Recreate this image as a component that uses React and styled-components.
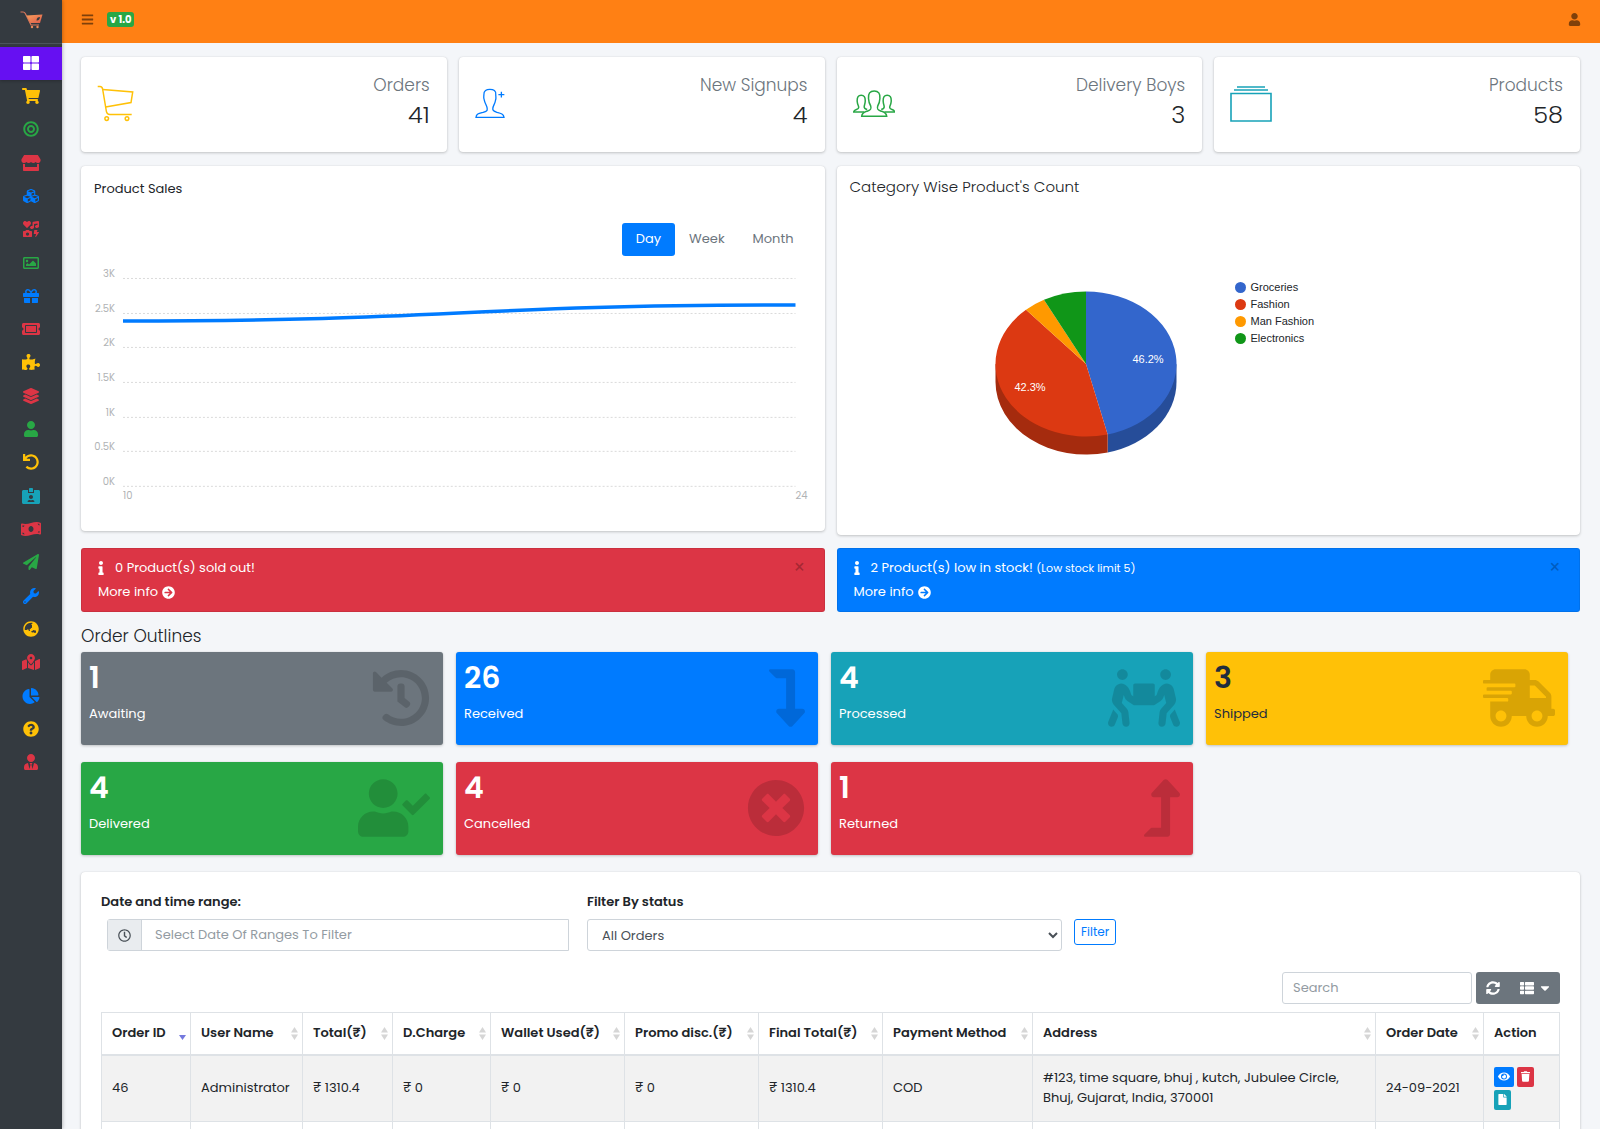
import React from "react"
import styled, { createGlobalStyle } from "styled-components"
import {
    FaThLarge, FaShoppingCart, FaBullseye, FaStore, FaCubes, FaIcons, FaRegImage, FaGift,
    FaTicketAlt, FaPuzzlePiece, FaLayerGroup, FaUser, FaUndo, FaIdCardAlt, FaMoneyBillWave,
    FaPaperPlane, FaWrench, FaGlobeAsia, FaMapMarkedAlt, FaChartPie, FaQuestionCircle, FaUserTie,
    FaBars, FaInfo, FaArrowCircleRight, FaHistory, FaLevelDownAlt, FaPeopleCarry, FaShippingFast,
    FaUserCheck, FaTimesCircle, FaLevelUpAlt, FaRegClock, FaSyncAlt, FaThList, FaCaretDown,
    FaEye, FaTrash, FaFile
} from "react-icons/fa"

const colors = {
    blue: "#007bff",
    indigo: "#6610f2",
    red: "#dc3545",
    orange: "#ff8014",
    yellow: "#ffc107",
    green: "#28a745",
    teal: "#17a2b8",
    gray: "#6c757d",
    dark: "#343a40",
    text: "#212529",
    border: "#dee2e6"
}

const GlobalStyle = createGlobalStyle`
    * { box-sizing: border-box; }
    body {
        margin: 0;
        background: #f4f6f9;
        color: ${colors.text};
        font-family: Poppins, Inter, "Open Sans", sans-serif;
        font-size: 13px;
        line-height: 20px;
    }
    button, input, select { font: inherit; }
    h1, h2, p, ul, dl, dd { margin: 0; padding: 0; font-weight: 400; }
    a { color: inherit; text-decoration: none; }
    svg { display: block; }
`

const Layout = styled.div`
    display: flex;
    height: 100vh;
`

const Sidebar = styled.aside`
    flex: 0 0 62px;
    background: ${colors.dark};
    box-shadow: 0 0 4px rgba(0, 0, 0, 0.35);
    z-index: 1;
    overflow: hidden;
`

const Brand = styled.a`
    display: flex;
    align-items: center;
    justify-content: center;
    height: 44px;
    padding-bottom: 4px;
    border-bottom: 1px solid #4b545c;
    margin-bottom: 3px;
`

const SideNav = styled.nav`
    display: flex;
    flex-direction: column;
    height: 733px;
`

const SideLink = styled.a`
    flex: 1;
    display: flex;
    align-items: center;
    justify-content: center;
    padding-bottom: 2px;
    color: ${props => props.$color};
    background: ${props => props.$active ? colors.indigo : "none"};
    box-shadow: ${props => props.$active ? "0 1px 3px rgba(0, 0, 0, 0.24)" : "none"};

    svg { height: 16px; width: 20px; }
`

const Page = styled.div`
    flex: 1;
    min-width: 0;
    overflow-y: auto;
    scrollbar-width: none;
`

const TopBar = styled.header`
    display: flex;
    align-items: center;
    height: 43px;
    padding: 0 19px 4px;
    background: ${colors.orange};
    color: rgba(0, 0, 0, 0.5);
`

const BarButton = styled.button`
    display: flex;
    padding: 0;
    border: 0;
    background: none;
    color: inherit;
    font-size: 13px;
    margin-left: ${props => props.$end ? "auto" : "0"};
`

const Version = styled.span`
    margin-left: 13px;
    padding: 0 3px;
    border-radius: 3px;
    background: ${colors.green};
    color: #fff;
    font-size: 10px;
    font-weight: 700;
    line-height: 15px;
`

const Main = styled.main`
    padding: 14px 20px 20px 19px;
`

const StatGrid = styled.section`
    display: grid;
    grid-template-columns: repeat(4, 1fr);
    gap: 12px;
    margin-bottom: 14px;
`

const Card = styled.div`
    background: #fff;
    border-radius: 4px;
    box-shadow: 0 0 1px rgba(0, 0, 0, 0.13), 0 1px 3px rgba(0, 0, 0, 0.2);
`

const StatCard = styled(Card)`
    display: flex;
    align-items: center;
    justify-content: space-between;
    height: 95px;
    padding: 0 17px 2px 16px;
`

const StatText = styled.dl`
    padding-bottom: 6px;
    text-align: right;
    font-weight: 300;

    dt {
        color: ${colors.gray};
        font-size: 17px;
        line-height: 28px;
    }
    dd {
        font-size: 24px;
        font-weight: 300;
        line-height: 32px;
    }
`

const TwoColumns = styled.section`
    display: grid;
    grid-template-columns: 1fr 1fr;
    align-items: start;
    gap: 12px;
    margin-bottom: 13px;
`

const SalesPanel = styled(Card)`
    padding: 13px 12px 0 13px;
`

const PiePanel = styled(Card)`
    padding: 11px 13px 80px;
`

const PanelTitle = styled.h2`
    font-size: ${props => props.$large ? "15px" : "13px"};
    font-weight: ${props => props.$large ? 300 : 400};
    line-height: 20px;
`

const Tabs = styled.div`
    display: flex;
    justify-content: flex-end;
    padding: 24px 5px 0;
`

const Tab = styled.button`
    padding: 6px 14px 7px;
    border: 0;
    border-radius: 3px;
    background: ${props => props.$active ? colors.blue : "none"};
    color: ${props => props.$active ? "#fff" : colors.gray};
`

const LineChart = styled.svg`
    width: 100%;
    font-size: 10px;
    fill: #b0b3b5;
`

const PieRow = styled.div`
    display: flex;
    gap: 58px;
    padding: 82px 0 0 145px;
    font-family: "Liberation Sans", Arial, sans-serif;
    font-size: 11px;

    svg { margin-top: 12px; }
`

const Legend = styled.ul`
    list-style: none;

    li {
        display: flex;
        align-items: center;
        gap: 5px;
        height: 17px;
        line-height: 17px;
    }
`

const Dot = styled.span`
    width: 11px;
    height: 11px;
    border-radius: 50%;
    background: ${props => props.$color};
`

const Alert = styled.div`
    display: flex;
    justify-content: space-between;
    height: 64px;
    padding: 7px 18px 7px 16px;
    border-radius: 3px;
    border: 1px solid rgba(0, 0, 0, 0.08);
    background: ${props => props.$color};
    color: #fff;
    line-height: 24px;

    small { font-size: 11px; }
`

const AlertLine = styled.p`
    display: flex;
    align-items: center;
    gap: 11px;

    svg { width: 6px; height: 14px; }
`

const MoreLink = styled.a`
    display: inline-flex;
    align-items: center;
    gap: 4px;
`

const CloseButton = styled.button`
    align-self: flex-start;
    padding: 0;
    border: 0;
    background: none;
    color: rgba(0, 0, 0, 0.25);
    font-size: 19px;
    line-height: 24px;
`

const Heading = styled.h1`
    font-size: 17px;
    font-weight: 300;
    line-height: 22px;
    margin-bottom: 5px;
`

const OutlineGrid = styled.section`
    display: grid;
    grid-template-columns: repeat(4, 1fr);
    gap: 17px 13px;
    padding-right: 12px;
    margin-bottom: 17px;
`

const OutlineBox = styled.a`
    display: flex;
    justify-content: space-between;
    height: 93px;
    padding: 7px 13px 0 8px;
    border-radius: 3px;
    background: ${props => props.$color};
    color: ${props => props.$dark ? "#1f2d3d" : "#fff"};
    box-shadow: 0 0 1px rgba(0, 0, 0, 0.13), 0 1px 3px rgba(0, 0, 0, 0.2);

    strong {
        display: block;
        font-size: 30px;
        font-weight: 600;
        line-height: 38px;
        margin-bottom: 7px;
    }
    svg {
        height: 58px;
        width: ${props => props.$iconWidth};
        margin-top: 10px;
        color: rgba(0, 0, 0, 0.15);
    }
`

const OrdersCard = styled(Card)`
    padding: 20px 20px 0;
`

const FilterForm = styled.form`
    display: grid;
    grid-template-columns: minmax(0, 468px) minmax(0, 475px) auto;
    justify-content: start;
    column-gap: 18px;
`

const Field = styled.div`
    label {
        display: block;
        font-weight: 600;
        margin-bottom: 7px;
    }
`

const InputGroup = styled.div`
    display: flex;
    height: 32px;
    margin-left: 6px;
    border: 1px solid #ced4da;
    border-radius: 3px 0 0 3px;

    input {
        flex: 1;
        min-width: 0;
        border: 0;
        padding: 0 13px;
        color: #495057;
    }
    input::placeholder { color: #939ba2; }
`

const Addon = styled.span`
    display: flex;
    align-items: center;
    justify-content: center;
    width: 34px;
    border-right: 1px solid #ced4da;
    background: #e9ecef;
    color: #495057;
`

const StatusSelect = styled.select`
    width: 100%;
    height: 32px;
    padding: 0 10px;
    border: 1px solid #ced4da;
    border-radius: 3px;
    background: #fff;
    color: #495057;
`

const FilterButton = styled.button`
    align-self: start;
    height: 26px;
    margin: 27px 0 0 -6px;
    padding: 0 6px;
    border: 1px solid ${colors.blue};
    border-radius: 3px;
    background: none;
    color: ${colors.blue};
    font-size: 12px;
`

const Toolbar = styled.div`
    display: flex;
    justify-content: flex-end;
    gap: 4px;
    margin: 21px 0 8px;

    input {
        width: 190px;
        height: 32px;
        padding: 0 10px;
        border: 1px solid #ced4da;
        border-radius: 3px;
    }
    input::placeholder { color: #939ba2; }
`

const ToolGroup = styled.div`
    display: flex;
    height: 32px;
    border-radius: 3px;
    background: ${colors.gray};
    color: #fff;

    button {
        display: flex;
        align-items: center;
        gap: 5px;
        padding: 0 10px;
        border: 0;
        background: none;
        color: inherit;
        font-size: 14px;
    }
    button + button { padding-right: 9px; }
    button svg + svg { height: 14px; width: 12px; }
`

const OrdersTable = styled.table`
    width: 100%;
    table-layout: fixed;
    border-collapse: collapse;

    th, td {
        border: 1px solid ${colors.border};
        padding: 0 10px;
        text-align: left;
        white-space: nowrap;
    }
    th {
        height: 42px;
        border-bottom-width: 2px;
        font-weight: 600;
    }
    td { height: 67px; }
    td.wrap { white-space: normal; }
    tbody tr:nth-child(odd) { background: #f2f2f2; }
`

const SortHeader = styled.div`
    display: flex;
    align-items: center;
    justify-content: space-between;
    margin-right: -6px;
`

const Actions = styled.div`
    display: flex;
    flex-wrap: wrap;
    gap: 3px;
`

const ActionButton = styled.button`
    display: flex;
    align-items: center;
    height: 20px;
    padding: 0 4px;
    border: 0;
    border-radius: 2px;
    background: ${props => props.$color};
    color: #fff;

    svg {
        height: 11px;
        width: ${props => props.$wide ? "12px" : "9px"};
    }
`

const sideLinks = [
    ["Dashboard", FaThLarge, "#fff"],
    ["Orders", FaShoppingCart, colors.yellow],
    ["Categories", FaBullseye, colors.green],
    ["Sellers", FaStore, colors.red],
    ["Products", FaCubes, colors.blue],
    ["Media", FaIcons, colors.red],
    ["Slider images", FaRegImage, colors.green],
    ["Offers", FaGift, colors.blue],
    ["Support tickets", FaTicketAlt, colors.red],
    ["Promo codes", FaPuzzlePiece, colors.yellow],
    ["Featured sections", FaLayerGroup, colors.red],
    ["Customers", FaUser, colors.green],
    ["Return requests", FaUndo, colors.yellow],
    ["Delivery boys", FaIdCardAlt, colors.teal],
    ["Payment requests", FaMoneyBillWave, colors.red],
    ["Send notification", FaPaperPlane, colors.green],
    ["System", FaWrench, colors.blue],
    ["Web settings", FaGlobeAsia, colors.yellow],
    ["Locations", FaMapMarkedAlt, colors.red],
    ["Reports", FaChartPie, colors.blue],
    ["FAQ", FaQuestionCircle, colors.yellow],
    ["System users", FaUserTie, colors.red]
]

const outlines = [
    { count: 1, label: "Awaiting", color: colors.gray, Icon: FaHistory, iconWidth: "58px" },
    { count: 26, label: "Received", color: colors.blue, Icon: FaLevelDownAlt, iconWidth: "36px" },
    { count: 4, label: "Processed", color: colors.teal, Icon: FaPeopleCarry, iconWidth: "72px" },
    { count: 3, label: "Shipped", color: colors.yellow, Icon: FaShippingFast, iconWidth: "72px", dark: true },
    { count: 4, label: "Delivered", color: colors.green, Icon: FaUserCheck, iconWidth: "72px" },
    { count: 4, label: "Cancelled", color: colors.red, Icon: FaTimesCircle, iconWidth: "58px" },
    { count: 1, label: "Returned", color: colors.red, Icon: FaLevelUpAlt, iconWidth: "36px" }
]

const columns = [
    ["Order ID", 89], ["User Name", 112], ["Total(₹)", 90], ["D.Charge", 98], ["Wallet Used(₹)", 134],
    ["Promo disc.(₹)", 134], ["Final Total(₹)", 124], ["Payment Method", 150], ["Address", null],
    ["Order Date", 108], ["Action", 76]
]

const slices = [
    { name: "Groceries", count: 12, color: "#3366cc" },
    { name: "Fashion", count: 11, color: "#dc3912" },
    { name: "Man Fashion", count: 1, color: "#ff9900" },
    { name: "Electronics", count: 2, color: "#109618" }
]

function Logo() {
    return (
        <svg width="23" height="18" viewBox="0 0 23 18" fill="none">
            <defs>
                <linearGradient id="logo" x1="0" y1="0" x2="1" y2="1">
                    <stop offset="0" stopColor="#f9a05c" />
                    <stop offset="1" stopColor="#dd5a4a" />
                </linearGradient>
            </defs>
            <path d="M0.5 1H3q1.500 0 2.300 1.500L11 14h8" stroke="#d9775a" strokeWidth="1.200" />
            <path d="M6.500 4.500L22.500 3.500 20 12H10.300Z" fill="url(#logo)" />
            <path d="M16.500 9.500c0-2.500 1.500-3.500 3.500-3.500-.3 2.500-1.500 4-3.500 3.500Z" fill="#343a40" />
            <circle cx="12" cy="16" r="1.200" fill="#ee8a5b" />
            <circle cx="17.500" cy="16" r="1.200" fill="#ee8a5b" />
        </svg>
    )
}

function CartOutline() {
    return (
        <svg width="37" height="37" viewBox="97 85 37 37" fill="none" stroke={colors.yellow} strokeWidth="1.500">
            <path d="M97.700 86.500h2.300q2.300 0 2.700 3l3.700 22q.5 3 3.600 3h21.700" />
            <path d="M102.700 89.500l30 2.500-1.700 10.500-25.400 4.400" />
            <circle cx="106.700" cy="118.600" r="1.800" />
            <circle cx="127" cy="118.600" r="1.800" />
        </svg>
    )
}

function PersonAddOutline() {
    return (
        <svg width="30" height="31" viewBox="106 143 91 92" fill="none" stroke={colors.blue} strokeWidth="4">
            <path d="M109 231C110 220 118 219 130 216C140 213 144 212 143 205C143 196 136 190 134 178C131 170 133 168 133 162C132 150 141 146 151 146C162 146 171 150 169 163C169 170 171 172 168 180C167 190 160 196 160 205C159 212 164 213 173 216C185 219 193 221 194 231Z" />
            <path d="M177 162h18M186 153v18" />
        </svg>
    )
}

function PeopleOutline() {
    return (
        <svg width="42" height="28" viewBox="853 90 42 28" fill="none" stroke={colors.green} strokeWidth="1.500">
            <path d="M861.700 116.300c.3-4 3-4.300 6-5.300 3.600-1.200 3.700-2.500 3-5-1.300-2-2-4-2.200-7.500-.5-5 1.500-7.500 5.700-7.500s6.200 2.500 5.700 7.500c-.2 3.500-.9 5.500-2.200 7.500-.7 2.500-.6 3.800 3 5 3 1 5.700 1.300 6 5.300Z" />
            <path d="M864 112h-10.300c.2-3 5-2 5-4.500 0-2-1.200-2.500-1.500-6-.3-4.500 1.300-6.300 4-6.300s4.300 1.800 4 6.300c-.2 3-1 3.500-1 5.500 0 1.500 1 2 3 2.500" />
            <path d="M884.400 112h10.300c-.2-3-5-2-5-4.500 0-2 1.200-2.500 1.500-6 .3-4.500-1.300-6.300-4-6.300s-4.300 1.800-4 6.300c.2 3 1 3.500 1 5.500 0 1.500-1 2-3 2.500" />
        </svg>
    )
}

function AlbumsOutline() {
    return (
        <svg width="42" height="36" viewBox="0 0 42 36" fill="none" stroke={colors.teal} strokeWidth="1.600">
            <path d="M7 1h28M4 4h34M1 7.500h40V35H1Z" />
        </svg>
    )
}

const stats = [
    { label: "Orders", value: 41, Icon: CartOutline },
    { label: "New Signups", value: 4, Icon: PersonAddOutline },
    { label: "Delivery Boys", value: 3, Icon: PeopleOutline },
    { label: "Products", value: 58, Icon: AlbumsOutline }
]

function SalesChart() {
    const labels = ["3K", "2.5K", "2K", "1.5K", "1K", "0.5K", "0K"]
    const gridY = index => Math.round(22 + index * 34.67)

    return (
        <LineChart viewBox="0 0 719 275" role="img" aria-label="Product sales by day">
            {labels.map((label, index) => (
                <g key={label}>
                    <text x="21" y={gridY(index) - 1} textAnchor="end">{label}</text>
                    <line x1="29" x2="702" y1={gridY(index) + 0.5} y2={gridY(index) + 0.5}
                        stroke="#dadada" strokeDasharray="2 2" />
                </g>
            ))}
            <path d="M29 65C365 65 365 49 702 49" fill="none" stroke={colors.blue} strokeWidth="3.500" />
            <text x="29" y="243">10</text>
            <text x="702" y="243">24</text>
        </LineChart>
    )
}

function PieChart() {
    const cx = 91
    const cy = 73
    const rx = 90.5
    const ry = 72.5
    const total = slices.reduce((sum, slice) => sum + slice.count, 0)
    const point = part => {
        const angle = (part / total) * Math.PI * 2
        return [cx + rx * Math.sin(angle), cy - ry * Math.cos(angle)]
    }
    const [splitX, splitY] = point(12)
    let start = 0

    return (
        <svg width="182" height="164" viewBox="0 0 182 164" role="img" aria-label="Products per category">
            <path d={`M${cx + rx} ${cy}v18A${rx} ${ry} 0 0 1 ${splitX} ${splitY + 18}v-18Z`} fill="#264d99" />
            <path d={`M${cx - rx} ${cy}v18A${rx} ${ry} 0 0 0 ${splitX} ${splitY + 18}v-18Z`} fill="#a52b0e" />
            {slices.map(slice => {
                const [x1, y1] = point(start)
                start += slice.count
                const [x2, y2] = point(start)
                return (
                    <path key={slice.name} fill={slice.color}
                        d={`M${cx} ${cy}L${x1} ${y1}A${rx} ${ry} 0 0 1 ${x2} ${y2}Z`} />
                )
            })}
            <text x="153" y="72" textAnchor="middle" fill="#fff">46.2%</text>
            <text x="35" y="100" textAnchor="middle" fill="#fff">42.3%</text>
        </svg>
    )
}

function SortArrows(props) {
    return (
        <svg width="7" height="13" viewBox="0 0 7 13" fill="#d6d6d6">
            {props.active ?
                <path d="M0 8h7l-3.500 5Z" fill="#7479de" /> :
                <path d="M0 5.500h7L3.500 0ZM0 7.500h7L3.500 13Z" />}
        </svg>
    )
}

function Notice(props) {
    return (
        <Alert $color={props.color}>
            <div>
                <AlertLine><FaInfo /><span>{props.children}</span></AlertLine>
                <MoreLink href="#orders">More info <FaArrowCircleRight /></MoreLink>
            </div>
            <CloseButton type="button" aria-label="Close">×</CloseButton>
        </Alert>
    )
}

function App() {
    return (
        <Layout>
            <GlobalStyle />
            <Sidebar>
                <Brand href="#home" aria-label="Home"><Logo /></Brand>
                <SideNav>
                    {sideLinks.map(([name, Icon, color], index) => (
                        <SideLink key={name} href="#menu" aria-label={name} $color={color} $active={index === 0}>
                            <Icon />
                        </SideLink>
                    ))}
                </SideNav>
            </Sidebar>
            <Page>
                <TopBar>
                    <BarButton type="button" aria-label="Toggle menu"><FaBars /></BarButton>
                    <Version>v 1.0</Version>
                    <BarButton type="button" aria-label="Account" $end><FaUser /></BarButton>
                </TopBar>
                <Main>
                    <StatGrid>
                        {stats.map(({ label, value, Icon }) => (
                            <StatCard key={label}>
                                <Icon />
                                <StatText>
                                    <dt>{label}</dt>
                                    <dd>{value}</dd>
                                </StatText>
                            </StatCard>
                        ))}
                    </StatGrid>

                    <TwoColumns>
                        <SalesPanel>
                            <PanelTitle>Product Sales</PanelTitle>
                            <Tabs>
                                <Tab type="button" $active>Day</Tab>
                                <Tab type="button">Week</Tab>
                                <Tab type="button">Month</Tab>
                            </Tabs>
                            <SalesChart />
                        </SalesPanel>
                        <PiePanel>
                            <PanelTitle $large>Category Wise Product's Count</PanelTitle>
                            <PieRow>
                                <PieChart />
                                <Legend>
                                    {slices.map(slice => (
                                        <li key={slice.name}><Dot $color={slice.color} />{slice.name}</li>
                                    ))}
                                </Legend>
                            </PieRow>
                        </PiePanel>
                    </TwoColumns>

                    <TwoColumns>
                        <Notice color={colors.red}>0 Product(s) sold out!</Notice>
                        <Notice color={colors.blue}>2 Product(s) low in stock! <small>(Low stock limit 5)</small></Notice>
                    </TwoColumns>

                    <Heading>Order Outlines</Heading>
                    <OutlineGrid>
                        {outlines.map(({ count, label, color, Icon, iconWidth, dark }) => (
                            <OutlineBox key={label} href="#orders" $color={color} $iconWidth={iconWidth} $dark={dark}>
                                <div>
                                    <strong>{count}</strong>
                                    {label}
                                </div>
                                <Icon />
                            </OutlineBox>
                        ))}
                    </OutlineGrid>

                    <OrdersCard id="orders">
                        <FilterForm>
                            <Field>
                                <label htmlFor="range">Date and time range:</label>
                                <InputGroup>
                                    <Addon><FaRegClock /></Addon>
                                    <input id="range" type="text" placeholder="Select Date Of Ranges To Filter" />
                                </InputGroup>
                            </Field>
                            <Field>
                                <label htmlFor="status">Filter By status</label>
                                <StatusSelect id="status">
                                    <option>All Orders</option>
                                </StatusSelect>
                            </Field>
                            <FilterButton type="button">Filter</FilterButton>
                        </FilterForm>

                        <Toolbar>
                            <input type="search" placeholder="Search" aria-label="Search" />
                            <ToolGroup>
                                <button type="button" aria-label="Refresh"><FaSyncAlt /></button>
                                <button type="button" aria-label="Columns"><FaThList /><FaCaretDown /></button>
                            </ToolGroup>
                        </Toolbar>

                        <OrdersTable>
                            <colgroup>
                                {columns.map(([name, width]) => <col key={name} width={width || undefined} />)}
                            </colgroup>
                            <thead>
                                <tr>
                                    {columns.map(([name], index) => (
                                        <th key={name}>
                                            <SortHeader>
                                                {name}
                                                {name === "Action" ? null : <SortArrows active={index === 0} />}
                                            </SortHeader>
                                        </th>
                                    ))}
                                </tr>
                            </thead>
                            <tbody>
                                <tr>
                                    <td>46</td>
                                    <td>Administrator</td>
                                    <td>₹ 1310.4</td>
                                    <td>₹ 0</td>
                                    <td>₹ 0</td>
                                    <td>₹ 0</td>
                                    <td>₹ 1310.4</td>
                                    <td>COD</td>
                                    <td className="wrap">#123, time square, bhuj , kutch, Jubulee Circle, Bhuj, Gujarat, India, 370001</td>
                                    <td>24-09-2021</td>
                                    <td>
                                        <Actions>
                                            <ActionButton type="button" aria-label="View" $color={colors.blue} $wide><FaEye /></ActionButton>
                                            <ActionButton type="button" aria-label="Delete" $color={colors.red}><FaTrash /></ActionButton>
                                            <ActionButton type="button" aria-label="Invoice" $color={colors.teal}><FaFile /></ActionButton>
                                        </Actions>
                                    </td>
                                </tr>
                                <tr>
                                    {columns.map(([name]) => <td key={name} />)}
                                </tr>
                            </tbody>
                        </OrdersTable>
                    </OrdersCard>
                </Main>
            </Page>
        </Layout>
    )
}

export default App
